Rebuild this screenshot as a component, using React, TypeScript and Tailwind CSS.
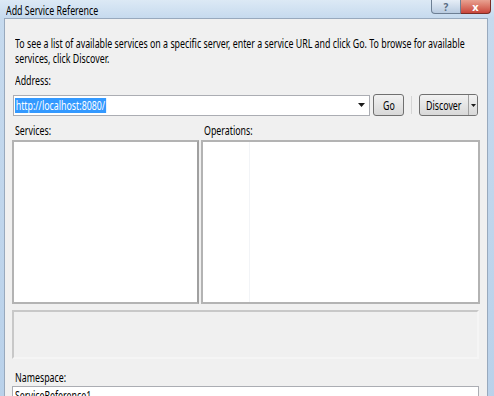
import React from "react";

const font = { fontFamily: '"Noto Sans", "Open Sans", sans-serif' };

// the reference text is a narrow, squeezed Segoe UI; squeeze Noto Sans the same way
function S({ children, className = "" }: { children: React.ReactNode; className?: string }) {
  return (
    <span className={`inline-block whitespace-nowrap origin-left scale-x-[0.68] ${className}`}>
      {children}
    </span>
  );
}

function Caret() {
  return (
    <svg width="7" height="4" viewBox="0 0 7 4" aria-hidden>
      <path d="M0 0h7L3.5 4z" fill="#1a1a1a" />
    </svg>
  );
}

function TitleBar() {
  return (
    <div className="relative h-[22px] bg-gradient-to-b from-[#dce9f5] to-[#c6daee] pl-[6px] pt-[2px] leading-[15px]">
      <S className="text-[13px] text-black">Add Service Reference</S>
      <div className="absolute right-[3px] top-0 flex">
        <div className="w-[30px] h-[14px] rounded-bl-[4px] border border-t-0 border-[#6d7f94] bg-gradient-to-b from-[#e6eef7] to-[#b9cbe0] flex items-center justify-center text-[10px] font-bold text-[#5a6c82] leading-none">
          ?
        </div>
        <div className="w-[30px] h-[14px] rounded-br-[4px] border border-t-0 border-l-0 border-[#7a2d25] bg-gradient-to-b from-[#e8a191] to-[#c8443a] flex items-center justify-center text-[11px] font-bold text-white leading-none">
          x
        </div>
      </div>
    </div>
  );
}

function Btn({ children, className = "" }: { children: React.ReactNode; className?: string }) {
  return (
    <div
      className={`h-[22px] border border-[#707070] rounded-[3px] bg-gradient-to-b from-[#f2f2f2] to-[#d8d8d8] flex items-center text-[13px] text-black overflow-hidden ${className}`}
    >
      {children}
    </div>
  );
}

export default function App() {
  return (
    <div
      style={font}
      className="w-[494px] h-[396px] overflow-hidden bg-[#c8dcf0] flex flex-col"
    >
      <TitleBar />
      <div className="flex-1 flex pl-[4px] pr-[6px] bg-gradient-to-b from-[#c6daee] to-[#b9d1ea]">
        <div className="flex-1 min-w-0 overflow-hidden border border-[#98a9bd] border-b-0 bg-[#f0f0f0] pl-[7px] pr-[5px] pt-[17px] text-[13px] text-black leading-[15px]">
          <div className="pl-[3px] flex flex-col">
            <S>To see a list of available services on a specific server, enter a service URL and click Go. To browse for available</S>
            <S>services, click Discover.</S>
          </div>
          <div className="mt-[7px] pl-[3px]">
            <S>Address:</S>
          </div>
          <div className="mt-[6px] flex items-center">
            <div className="ml-px w-[357px] h-[21px] border border-[#abadb3] bg-white flex items-center pl-[1px] pr-[4px] overflow-hidden">
              <S className="bg-[#3399ff] text-white px-[1px] leading-[15px]">http://localhost:8080/</S>
              <span className="ml-auto">
                <Caret />
              </span>
            </div>
            <Btn className="ml-[3px] w-[31px] pl-[9px]">
              <S>Go</S>
            </Btn>
            <div className="mx-[7px] w-px h-[18px] bg-[#d5d5d5]" />
            <Btn className="w-[59px] pl-[6px] relative">
              <S>Discover</S>
              <span className="absolute right-0 top-0 bottom-0 w-[9px] border-l border-[#a0a0a0] bg-gradient-to-b from-[#f2f2f2] to-[#d8d8d8] flex items-center justify-center">
                <svg width="5" height="3" viewBox="0 0 5 3" aria-hidden>
                  <path d="M0 0h5L2.5 3z" fill="#1a1a1a" />
                </svg>
              </span>
            </Btn>
          </div>
          <div className="mt-[7px] flex">
            <div className="w-[189px] pl-[3px]">
              <S>Services:</S>
            </div>
            <div className="pl-[3px]">
              <S>Operations:</S>
            </div>
          </div>
          <div className="mt-[2px] flex gap-[2px] h-[164px]">
            <div className="w-[187px] border-2 border-[#b3b3b3] border-r-[#a0a0a0] bg-white" />
            <div className="w-[279px] border-2 border-[#b3b3b3] bg-white flex">
              <div className="w-[47px] border-r border-[#f2f4f7]" />
            </div>
          </div>
          <div className="mt-[6px] w-[467px] h-[49px] border-2 border-[#c8c8c8] border-r-[#f5f5f5] border-b-[#f5f5f5]" />
          <div className="mt-[11px] pl-[3px]">
            <S>Namespace:</S>
          </div>
          <div className="mt-[1px] w-[467px] h-[22px] border border-[#abadb3] bg-white pl-[2px] pt-px">
            <S>ServiceReference1</S>
          </div>
        </div>
      </div>
    </div>
  );
}
